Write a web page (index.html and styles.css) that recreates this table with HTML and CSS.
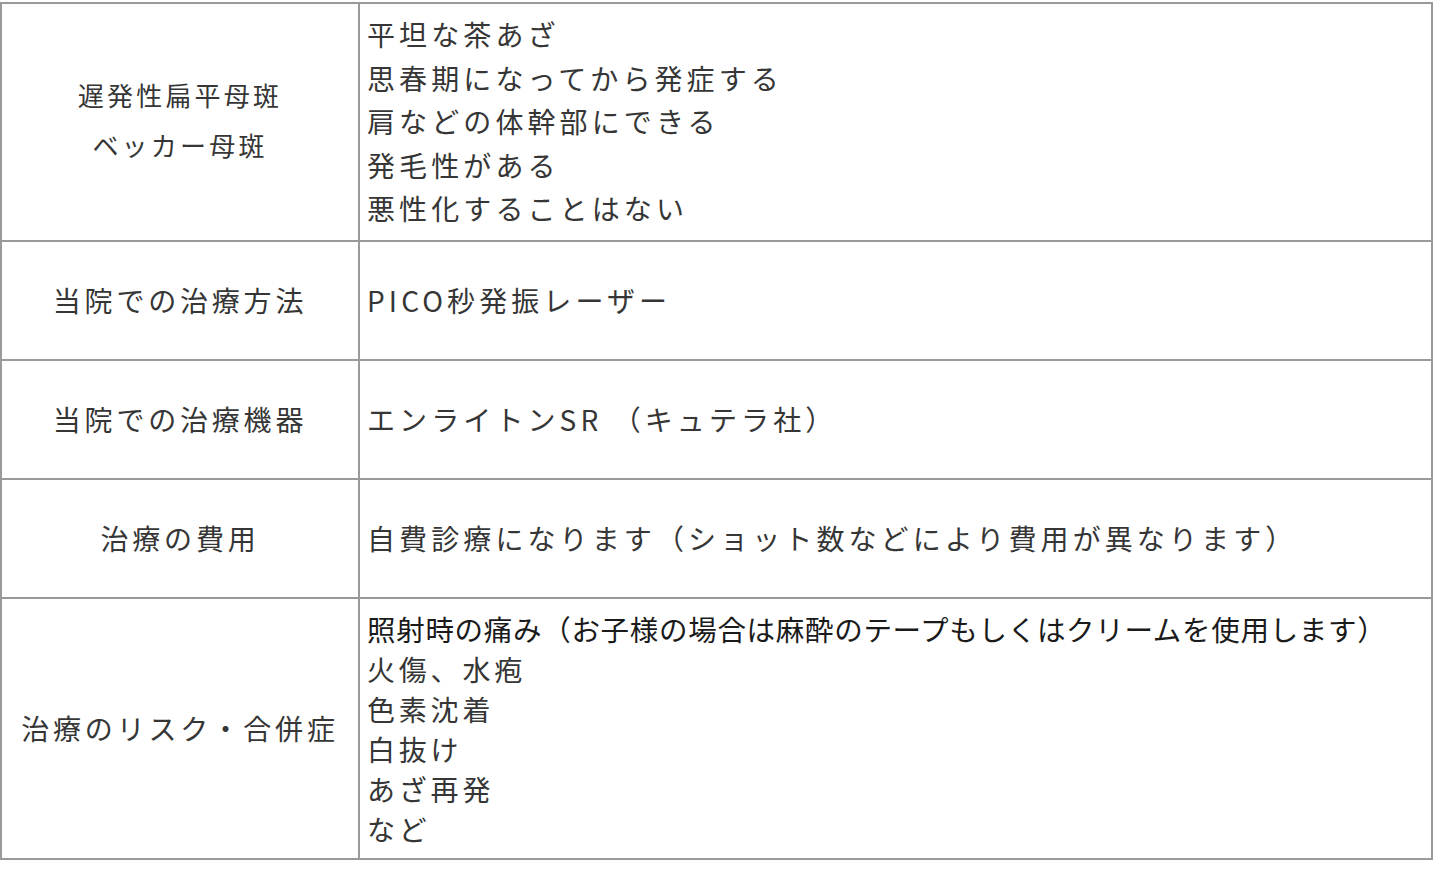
FILE: index.html
```html
<!DOCTYPE html>
<html lang="ja">
<head>
<meta charset="utf-8">
<title>遅発性扁平母斑</title>
<link rel="stylesheet" href="styles.css">
</head>
<body>
<table class="info">
  <colgroup><col class="c-head"><col class="c-body"></colgroup>
  <tr class="r-tall">
    <th class="small">遅発性扁平母斑<br>ベッカー母斑</th>
    <td class="lines">平坦な茶あざ<br>思春期になってから発症する<br>肩などの体幹部にできる<br>発毛性がある<br>悪性化することはない</td>
  </tr>
  <tr class="r-std">
    <th>当院での治療方法</th>
    <td>PICO秒発振レーザー</td>
  </tr>
  <tr class="r-std">
    <th>当院での治療機器</th>
    <td>エンライトンSR （キュテラ社）</td>
  </tr>
  <tr class="r-std">
    <th>治療の費用</th>
    <td>自費診療になります（ショット数などにより費用が異なります）</td>
  </tr>
  <tr class="r-risk">
    <th>治療のリスク・合併症</th>
    <td class="risk"><span class="first">照射時の痛み（お子様の場合は麻酔のテープもしくはクリームを使用します）</span><br>火傷、水疱<br>色素沈着<br>白抜け<br>あざ再発<br>など</td>
  </tr>
</table>
</body>
</html>
```
FILE: styles.css
```css
html, body {
  margin: 0;
  padding: 0;
  background: #ffffff;
}
body {
  padding-top: 2px;
  font-family: "Noto Sans CJK JP", "Noto Sans", sans-serif;
  color: #363636;
}
.info {
  border-collapse: collapse;
  width: 1433px;
  table-layout: fixed;
}
.c-head { width: 358px; }
.info th, .info td {
  border: 2px solid #9a9a9a;
  padding: 0;
  vertical-align: middle;
  font-size: 28px;
  letter-spacing: 4.1px;
  line-height: 43.5px;
  font-weight: 400;
}
.info th {
  text-align: center;
  letter-spacing: 3.8px;
}
.info td {
  text-align: left;
  padding-left: 7px;
}
.info th.small {
  font-size: 26px;
  letter-spacing: 3.2px;
  line-height: 50px;
  padding-bottom: 4px;
}
.r-tall { height: 238px; }
.r-std { height: 119px; }
.r-risk { height: 261px; }
.info td.risk {
  font-size: 28px;
  line-height: 40px;
  letter-spacing: 3.8px;
}
.risk .first {
  letter-spacing: 0.7px;
  font-size: 28.5px;
  color: #1a1a1a;
}
```
